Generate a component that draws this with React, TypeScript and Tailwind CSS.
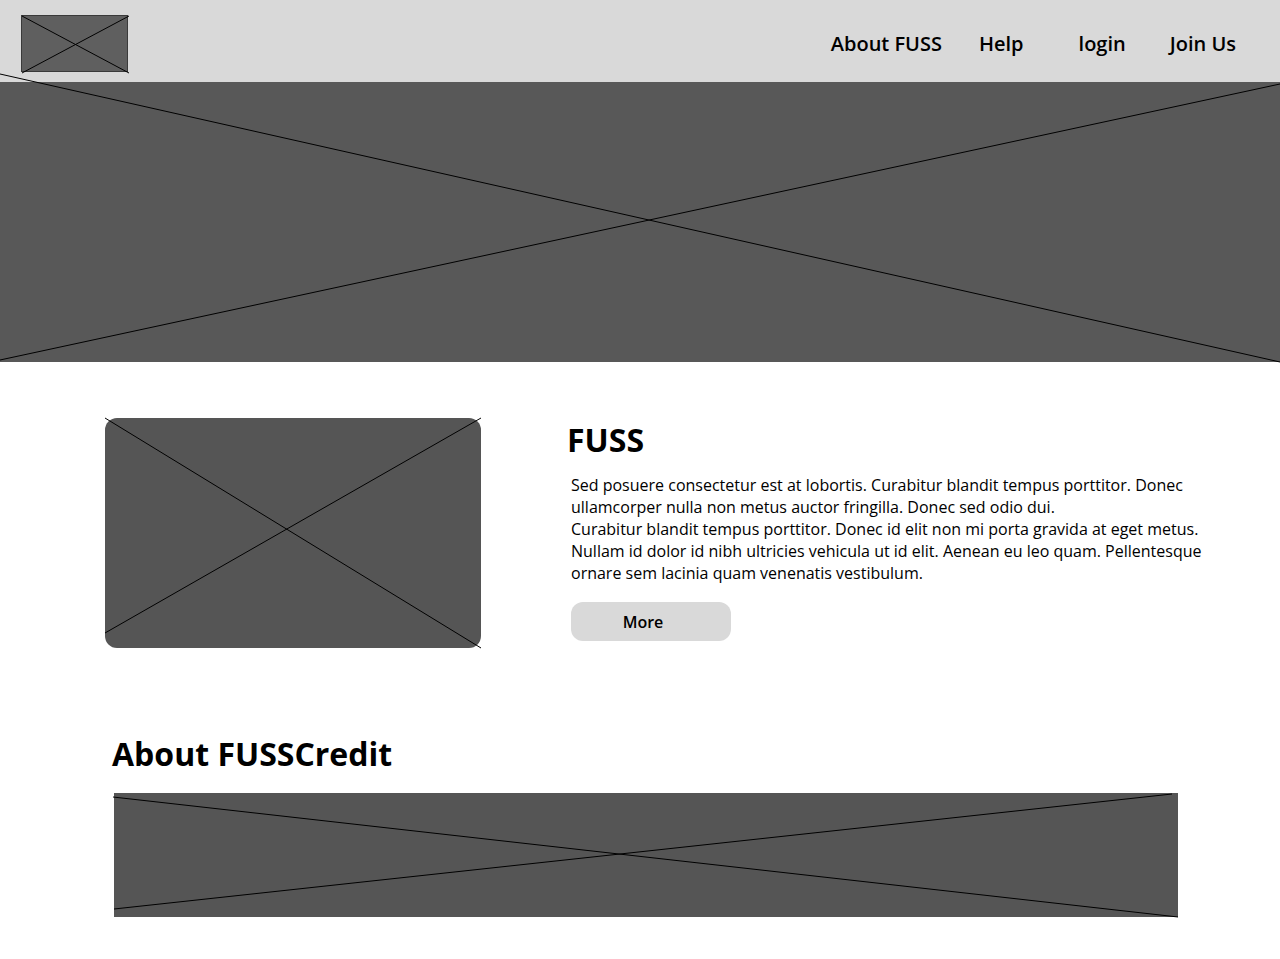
import React from "react";

const font = { fontFamily: '"Open Sans", "Noto Sans", sans-serif' };

/** Wireframe placeholder: grey box with two crossing lines. */
function Placeholder({
  className,
  lines,
  w,
  h,
}: {
  className: string;
  lines: [number, number, number, number][];
  w: number;
  h: number;
}) {
  return (
    <div className={`relative ${className}`}>
      <svg
        className="absolute left-0 top-0 overflow-visible"
        width={w}
        height={h}
        viewBox={`0 0 ${w} ${h}`}
      >
        {lines.map(([x1, y1, x2, y2], i) => (
          <line key={i} x1={x1} y1={y1} x2={x2} y2={y2} stroke="#000" strokeWidth="1" />
        ))}
      </svg>
    </div>
  );
}

const NAV = [
  { label: "About FUSS", className: "" },
  { label: "Help", className: "ml-[37px]" },
  { label: "login", className: "ml-[55px]" },
  { label: "Join Us", className: "ml-[44px]" },
];

export default function App() {
  return (
    <div className="min-h-[959px] w-[1280px] bg-white text-black" style={font}>
      <header className="flex h-[82px] items-center justify-between bg-[#d9d9d9] pr-[44px]">
        <Placeholder
          className="ml-[21px] mt-[4px] h-[57px] w-[107px] border border-[#3a3a3a] bg-[#5f5f5f]"
          w={107}
          h={57}
          lines={[
            [0, 0, 107, 57],
            [0, 57, 107, 0],
          ]}
        />
        <nav className="flex items-center pt-[6px] text-[20px] font-semibold">
          {NAV.map((n) => (
            <a key={n.label} className={n.className}>
              {n.label}
            </a>
          ))}
        </nav>
      </header>

      <Placeholder
        className="h-[280px] w-full bg-[#585858]"
        w={1280}
        h={280}
        lines={[
          [0, -8, 1280, 280],
          [0, 278, 1280, 2],
        ]}
      />

      <section className="flex pt-[56px]">
        <Placeholder
          className="ml-[105px] h-[230px] w-[376px] shrink-0 rounded-[12px] bg-[#555555]"
          w={376}
          h={230}
          lines={[
            [0, 0, 376, 230],
            [0, 215, 376, 0],
          ]}
        />
        <div className="ml-[86px] w-[650px]">
          <h2 className="mt-[2px] text-[32px] font-bold leading-[40px]">FUSS</h2>
          <p className="ml-[4px] mt-[14px] text-[16px] leading-[22px]">
            Sed posuere consectetur est at lobortis. Curabitur blandit tempus porttitor. Donec
            ullamcorper nulla non metus auctor fringilla. Donec sed odio dui.
            <br />
            Curabitur blandit tempus porttitor. Donec id elit non mi porta gravida at eget metus.
            Nullam id dolor id nibh ultricies vehicula ut id elit. Aenean eu leo quam. Pellentesque
            ornare sem lacinia quam venenatis vestibulum.
          </p>
          <button className="ml-[4px] mt-[18px] h-[39px] w-[160px] rounded-[12px] bg-[#d9d9d9] pr-[16px] text-[16px] font-semibold">
            More
          </button>
        </div>
      </section>

      <h2 className="ml-[112px] mt-[86px] text-[32px] font-bold leading-[40px]">About FUSSCredit</h2>
      <Placeholder
        className="ml-[114px] mt-[19px] h-[124px] w-[1064px] bg-[#555555]"
        w={1064}
        h={124}
        lines={[
          [-1, 4, 1064, 124],
          [0, 116, 1058, 1],
        ]}
      />
    </div>
  );
}
